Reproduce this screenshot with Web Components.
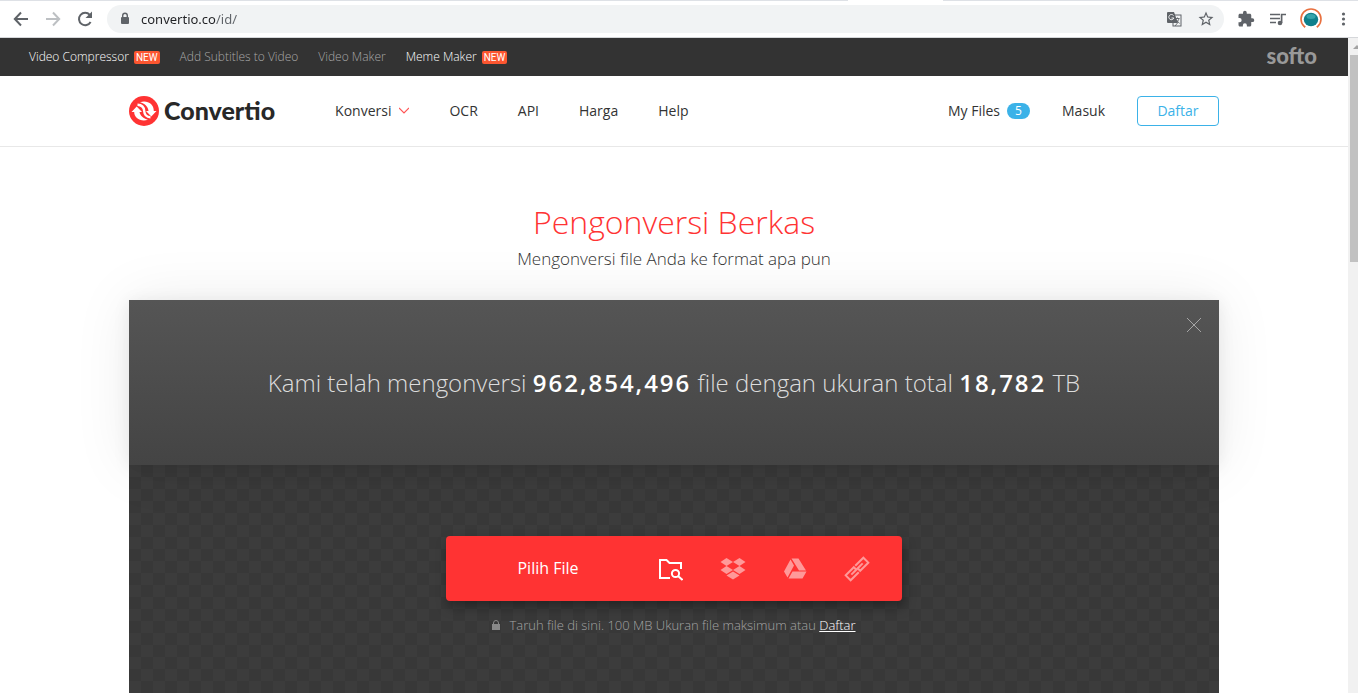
<!DOCTYPE html>
<html lang="id">
<head>
<meta charset="utf-8">
<title>Convertio — Pengonversi Berkas</title>
<style>
  html, body { margin: 0; }
  body { font-family: "Open Sans", "Noto Sans", sans-serif; background: #fff; color: #333; }
</style>
</head>
<body>
<browser-window>
  <browser-toolbar slot="toolbar"></browser-toolbar>
  <promo-bar></promo-bar>
  <site-header></site-header>
  <page-title>
    Pengonversi Berkas
    <span slot="subtitle">Mengonversi file Anda ke format apa pun</span>
  </page-title>
  <converter-panel>
    <stats-banner slot="banner"></stats-banner>
    <file-picker></file-picker>
    <drop-note></drop-note>
  </converter-panel>
</browser-window>

<script>
const define = (name, html) => {
  const template = document.createElement('template');
  template.innerHTML = html;
  customElements.define(name, class extends HTMLElement {
    constructor() {
      super();
      this.attachShadow({ mode: 'open' }).append(template.content.cloneNode(true));
    }
  });
};

define('browser-window', `
<style>
  :host { display: flex; flex-direction: column; height: 100vh; overflow: hidden; }
  .viewport { flex: 1; display: flex; min-height: 0; }
  main { flex: 1; min-width: 0; display: flex; flex-direction: column; overflow: hidden; }
</style>
<slot name="toolbar"></slot>
<div class="viewport">
  <main><slot></slot></main>
  <scroll-track></scroll-track>
</div>`);

define('scroll-track', `
<style>
  :host { display: flex; flex-direction: column; width: 10px; background: #f1f1f1; overflow: hidden; }
  svg { display: block; height: 17px; width: 10px; }
  .thumb { margin-left: 2px; height: 207px; background: #c1c1c1; }
</style>
<svg viewBox="0 0 10 17"><path d="M5 11l4-4 4 4z" fill="#a3a3a3"/></svg>
<div class="thumb"></div>`);

define('browser-toolbar', `
<style>
  :host { display: block; background: #fff; border-bottom: 1px solid #d5d7da; }
  .tabs { display: flex; height: 1px; }
  .tabs i { background: #dee1e6; flex: 415; }
  .tabs i:first-child { flex: 848; }
  .tabs b { flex: 95; }
  .row { display: flex; align-items: center; height: 36px; padding: 0 7px 0 12px; }
  button { border: 0; padding: 0; margin: 0; background: none; display: flex; color: #5f6368; }
  svg { display: block; }
  .nav { display: flex; gap: 14px; padding-right: 13px; }
  .nav .off { color: #bdc0c3; }
  form { flex: 1; display: flex; align-items: center; height: 28px; border-radius: 14px; background: #f1f3f4; padding: 0 9px 0 10px; color: #5f6368; }
  input { flex: 1; min-width: 0; border: 0; outline: 0; padding: 0 0 0 8px; margin: 0; font: 13px/20px "Noto Sans", sans-serif;
    color: transparent; background: linear-gradient(90deg, #202124 83px, #5f6368 83px) text; -webkit-background-clip: text; }
  .inner { display: flex; gap: 14px; }
  .outer { display: flex; align-items: center; gap: 12px; padding-left: 13px; }
</style>
<div class="tabs"><i></i><b></b><i></i></div>
<div class="row">
  <div class="nav">
    <button aria-label="Kembali"><svg width="18" height="18" viewBox="0 0 18 18" fill="none" stroke="currentColor" stroke-width="2"><path d="M16 9H3M9 2.500L2.800 9L9 15.500"/></svg></button>
    <button class="off" aria-label="Maju"><svg width="18" height="18" viewBox="0 0 18 18" fill="none" stroke="currentColor" stroke-width="2"><path d="M2 9H15M9 2.500L15.200 9L9 15.500"/></svg></button>
    <button aria-label="Muat ulang"><svg width="18" height="18" viewBox="0 0 18 18"><path d="M14.600 12A6.200 6.200 0 1 1 13.800 4.800" fill="none" stroke="currentColor" stroke-width="2"/><path d="M16 1.500V8H9.500z" fill="currentColor"/></svg></button>
  </div>
  <form>
    <svg width="16" height="16" viewBox="0 0 16 16"><rect x="4" y="6" width="8" height="7" rx="1" fill="currentColor"/><path d="M5.700 7V4.500a2.300 2.300 0 0 1 4.600 0V7" fill="none" stroke="currentColor" stroke-width="1.400"/></svg>
    <input aria-label="Alamat" value="convertio.co/id/">
    <div class="inner">
      <button type="button" aria-label="Terjemahkan"><svg width="18" height="18" viewBox="0 0 18 18"><rect x="8" y="5" width="8" height="11" fill="#f1f3f4" stroke="currentColor"/><path d="M3 2h6l4 11H3a1 1 0 0 1-1-1V3a1 1 0 0 1 1-1z" fill="currentColor"/><path d="M8.500 5.500A2.600 2.600 0 1 0 8.900 8H6.500" fill="none" stroke="#f1f3f4"/><path d="M10.500 8.500h4M12.500 7.500v1M14 8.500c-.5 2-1.500 3-2.500 4M11.500 10l3 3.500M10 16l2.500-3" fill="none" stroke="currentColor" stroke-width=".9"/></svg></button>
      <button type="button" aria-label="Markah"><svg width="18" height="18" viewBox="0 0 24 24"><path d="M22 9.240l-7.190-.62L12 2 9.190 8.630 2 9.240l5.460 4.730L5.820 21 12 17.270 18.180 21l-1.630-7.030L22 9.240zM12 15.400l-3.760 2.270 1-4.280-3.320-2.880 4.380-.38L12 6.100l1.710 4.040 4.380.38-3.320 2.880 1 4.280L12 15.400z" fill="currentColor"/></svg></button>
    </div>
  </form>
  <div class="outer">
    <button aria-label="Ekstensi"><svg width="18" height="18" viewBox="0 0 24 24"><path d="M20.500 11H19V7c0-1.100-.9-2-2-2h-4V3.500a2.500 2.500 0 0 0-5 0V5H4c-1.100 0-2 .9-2 2v3.800h1.500a2.700 2.700 0 0 1 0 5.400H2V20c0 1.100.9 2 2 2h3.800v-1.500a2.700 2.700 0 0 1 5.400 0V22H17c1.100 0 2-.9 2-2v-4h1.500a2.500 2.500 0 0 0 0-5z" fill="currentColor"/></svg></button>
    <button aria-label="Media"><svg width="20" height="18" viewBox="0 0 20 18"><path d="M3 4.500h10M3 8.500h10M3 12.500h6" stroke="currentColor" stroke-width="1.600"/><circle cx="13" cy="13" r="2.300" fill="currentColor"/><path d="M14.600 13V4.500H19" fill="none" stroke="currentColor" stroke-width="1.700"/></svg></button>
    <button aria-label="Profil"><svg width="24" height="24" viewBox="0 0 24 24"><circle cx="12" cy="12" r="10" fill="#fff" stroke="#e8703f" stroke-width="1.600"/><path d="M5 22q7 3 14 0l-2-3H7z" fill="#fff"/><ellipse cx="12" cy="12.500" rx="7.200" ry="6.800" fill="#0f7f8b"/><ellipse cx="12" cy="9.500" rx="4.500" ry="2.500" fill="#35a3ab"/></svg></button>
    <button aria-label="Menu"><svg width="16" height="18" viewBox="0 0 16 18" fill="currentColor"><circle cx="8.500" cy="4" r="1.600"/><circle cx="8.500" cy="9" r="1.600"/><circle cx="8.500" cy="14" r="1.600"/></svg></button>
  </div>
</div>`);

define('new-badge', `
<style>
  :host { display: block; background: #fc5630; color: #fff; border-radius: 2px; padding: 0 2px; font: 10px/13px Roboto, "Liberation Sans", sans-serif; }
</style><slot></slot>`);

define('promo-bar', `
<style>
  :host { display: flex; justify-content: space-between; align-items: center; height: 38px; background: #333; padding: 0 31px 0 29px; flex: none; }
  nav { display: flex; gap: 20px; }
  a { display: flex; align-items: center; gap: 5px; font-size: 12px; line-height: 18px; font-weight: 300; color: #a8a8a8; text-decoration: none; }
  a.hot { color: #fff; }
  .softo { font: 900 22px/24px Lato, sans-serif; color: #999; padding-bottom: 2px; }
</style>
<nav>
  <a class="hot" href="#">Video Compressor <new-badge>NEW</new-badge></a>
  <a href="#">Add Subtitles to Video</a>
  <a href="#">Video Maker</a>
  <a class="hot" href="#">Meme Maker <new-badge>NEW</new-badge></a>
</nav>
<a class="softo" href="#">softo</a>`);

define('convertio-logo', `
<style>
  :host { display: block; }
  a { display: flex; align-items: center; gap: 5px; color: #282828; text-decoration: none; font: 900 25px/28px Lato, sans-serif; }
  span { padding-bottom: 2px; }
</style>
<a href="#">
  <svg width="30" height="30" viewBox="0 0 30 30"><circle cx="15" cy="15" r="15" fill="#f33"/>
    <path fill="#fff" d="M11 6.300C18 3.800 25 8 24.800 15H27.500L22.300 20.500L17 15H19.500C19 10.500 15.500 7.500 11 6.300z"/>
    <path fill="#fff" d="M19 23.700C12 26.200 5 22 5.200 16H2.500L7.700 10.500L13 16H10.500C11 19.500 14.500 22.500 19 23.700z"/>
    <path d="M8.500 8.800C13 9 15 11.500 15.200 15C15.400 18.500 17.500 21 21.500 21.200" fill="none" stroke="#fff" stroke-width="2.400"/>
  </svg>
  <span>Convertio</span>
</a>`);

define('site-header', `
<style>
  :host { display: block; border-bottom: 1px solid #e8e8e8; flex: none; }
  .inner { max-width: 1090px; margin: 0 auto; height: 70px; display: flex; align-items: center; }
  nav { display: flex; align-items: center; gap: 40px; }
  .main { flex: 1; padding-left: 60px; }
  .user { gap: 32px; }
  a { display: flex; align-items: center; gap: 8px; color: #333; font-size: 14px; line-height: 20px; text-decoration: none; }
  .user a { gap: 7px; }
  .count { background: #3bb2e8; color: #fff; border-radius: 8px; width: 23px; text-align: center; font-size: 12px; line-height: 16px; }
  button { width: 82px; height: 30px; border: 1px solid #3bb2e8; border-radius: 4px; background: none; color: #3bb2e8; font: 14px/20px "Open Sans", sans-serif; padding: 0; }
</style>
<div class="inner">
  <convertio-logo></convertio-logo>
  <nav class="main">
    <a href="#">Konversi <svg width="10" height="8" viewBox="0 0 10 8"><path d="M0 1l5 5L10 1" fill="none" stroke="#f55" stroke-width="1.200"/></svg></a>
    <a href="#">OCR</a><a href="#">API</a><a href="#">Harga</a><a href="#">Help</a>
  </nav>
  <nav class="user">
    <a href="#">My Files <span class="count">5</span></a>
    <a href="#">Masuk</a>
    <button>Daftar</button>
  </nav>
</div>`);

define('page-title', `
<style>
  :host { display: block; text-align: center; padding: 52px 0 28px; flex: none; }
  h1 { margin: 0; font-size: 32px; line-height: 46px; font-weight: 300; color: #f33; }
  p { margin: 0; font-size: 17px; line-height: 27px; font-weight: 300; color: #333; }
</style>
<h1><slot></slot></h1>
<p><slot name="subtitle"></slot></p>`);

define('converter-panel', `
<style>
  :host { display: flex; flex-direction: column; flex: 1; width: 100%; max-width: 1090px; margin: 0 auto; }
  .drop { flex: 1; display: flex; flex-direction: column; align-items: center; gap: 14px; padding: 71px 16px 40px;
    background: repeating-conic-gradient(#383838 0 25%, #3c3c3c 0 50%) 0 0 / 24px 24px; }
</style>
<slot name="banner"></slot>
<div class="drop"><slot></slot></div>`);

define('stats-banner', `
<style>
  :host { display: block; position: relative; background: linear-gradient(#555, #444); color: #ddd; flex: none;
    box-shadow: 0 0 60px rgba(0,0,0,.08), 0 2px 16px rgba(0,0,0,.08); }
  p { margin: 0; padding: 64px 16px; text-align: center; font-size: 24px; line-height: 37px; font-weight: 300; }
  strong { font-weight: 600; color: #fff; letter-spacing: 2px; }
  button { position: absolute; top: 17px; right: 17px; border: 0; padding: 0; background: none; }
  svg { display: block; }
</style>
<p>Kami telah mengonversi <strong>962,854,496</strong> file dengan ukuran total <strong>18,782</strong> TB</p>
<button aria-label="Tutup"><svg width="16" height="16" viewBox="0 0 16 16"><path d="M1 1l14 14M15 1L1 15" stroke="#a5a5a5"/></svg></button>`);

define('file-picker', `
<style>
  :host { display: flex; box-sizing: border-box; width: 100%; max-width: 456px; height: 65px; padding: 0 14px 0 10px; background: #f33; border-radius: 4px; box-shadow: 2px 6px 12px rgba(0,0,0,.35); }
  button { border: 0; padding: 0; background: none; color: #ff9999; width: 62px; display: flex; align-items: center; justify-content: center; }
  .pick { flex: 1; color: #fff; font: 16px/24px "Open Sans", sans-serif; padding-bottom: 2px; }
  .on { color: #fff; }
</style>
<button class="pick">Pilih File</button>
<button class="on" aria-label="Dari komputer"><svg width="24" height="24" viewBox="0 0 24 24" fill="none" stroke="currentColor" stroke-width="2"><path d="M11 21H1V3h6.500l3 3H22v6"/><circle cx="16.500" cy="16.500" r="3.600"/><path d="M19 19l4.500 4"/></svg></button>
<button aria-label="Dropbox"><svg width="26" height="24" viewBox="0 0 26 24" fill="currentColor"><path d="M6.500 1l6.500 4-6.500 4L0.500 5zM19.500 1l6 4-6 4L13 5zM6.500 9l6.500 4-6.500 4-6-4zM19.500 9l6 4-6 4L13 13zM13 14.500l6.500 4-6.500 4-6.500-4z"/></svg></button>
<button aria-label="Google Drive"><svg width="24" height="24" viewBox="0 0 24 24" fill="currentColor"><path d="M8.500 1.500h7l7.500 12h-7zM7.500 2.500L11 8.500 4.500 20.500 1 14.500zM9.500 14.500H23.500l-4 7H5.500z"/></svg></button>
<button aria-label="Tautan"><svg width="26" height="26" viewBox="0 0 26 26" fill="none" stroke="currentColor" stroke-width="2"><g transform="rotate(-45 13 13)"><path d="M12 16.500H0.500v-7H12V12M14 9.500h11.500v7H14V14M5 13h5M8 13h10M16 13h5"/></g></svg></button>`);

define('drop-note', `
<style>
  :host { display: flex; align-items: center; gap: 9px; font-size: 13px; line-height: 20px; font-weight: 300; color: #a3a3a3; }
  p { margin: 0; }
  a { color: #fff; text-decoration: underline; }
</style>
<svg width="8" height="11" viewBox="0 0 8 11"><rect y="4" width="8" height="6" fill="#888"/><path d="M1.500 4.500V3a2.500 2.500 0 0 1 5 0v1.500" fill="none" stroke="#888"/></svg>
<p>Taruh file di sini. 100 MB Ukuran file maksimum atau <a href="#">Daftar</a></p>`);
</script>
</body>
</html>
